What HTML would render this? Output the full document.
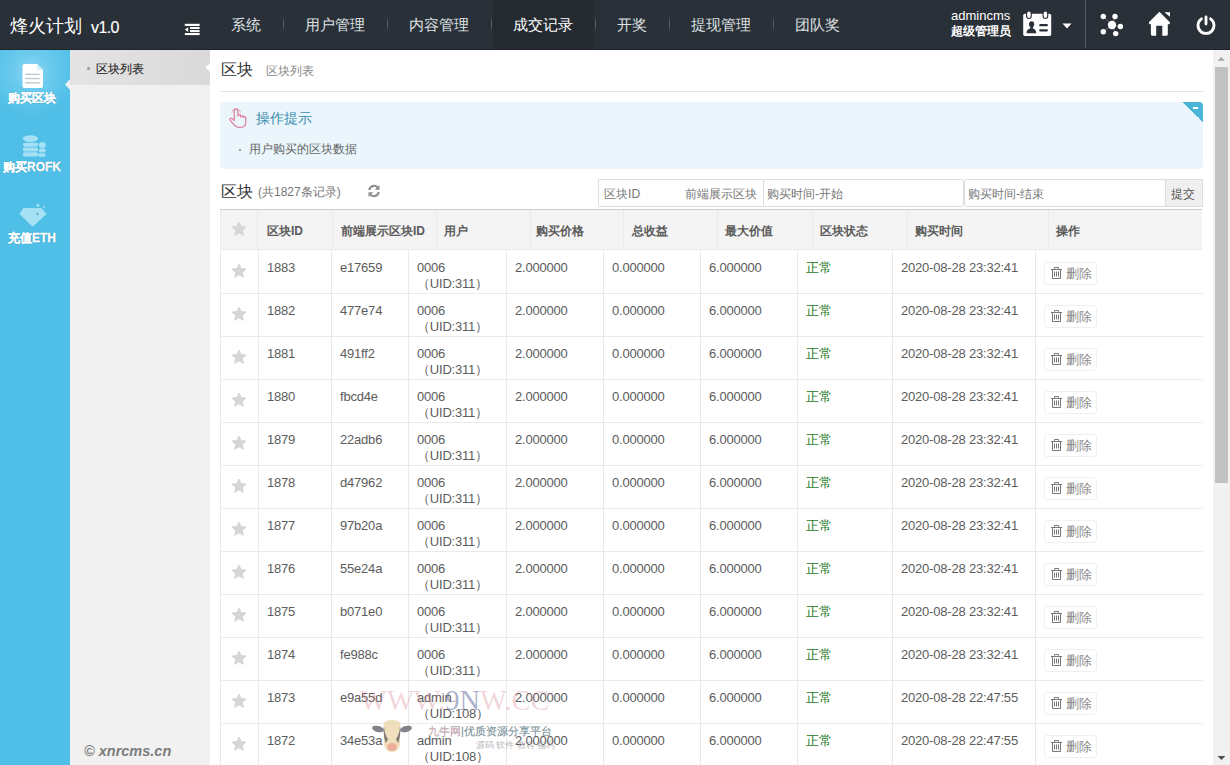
<!DOCTYPE html>
<html><head><meta charset="utf-8">
<style>
*{margin:0;padding:0;box-sizing:border-box}
html,body{width:1230px;height:765px;overflow:hidden;background:#fff;font-family:"Liberation Sans",sans-serif;color:#555}
#hd{position:absolute;left:0;top:0;width:1230px;height:50px;background:#2a3037;border-bottom:1px solid #1f232a}
#logo{position:absolute;left:10px;top:16px;color:#fff;font-size:18px;line-height:20px;white-space:nowrap}
#logo span{font-size:16px;margin-left:9px;letter-spacing:-0.6px;-webkit-text-stroke:0.15px #fff;position:relative;top:0.5px}
.nav{position:absolute;top:17px;color:#dfe1e4;font-size:15px;line-height:16px;white-space:nowrap}
.sep{position:absolute;top:16px;width:1px;height:16px;background:linear-gradient(#2a3037,#5f666e 50%,#2a3037)}
#active{position:absolute;left:493px;top:0;width:100px;height:49px;background:#242a30}
#user{position:absolute;left:951px;top:9px;color:#fff;font-size:13px;line-height:14px;white-space:nowrap}
#user b{display:block;font-size:12px;line-height:14px;margin-top:1px}
#vline{position:absolute;left:1085px;top:0;width:1px;height:48px;background:#565c64}
#side{position:absolute;left:0;top:50px;width:70px;height:715px;background:#4fbfe7}
.si{position:absolute;left:-3px;width:70px;text-align:center;color:#fff;font-size:12px;font-weight:bold;line-height:12px;white-space:nowrap;-webkit-text-stroke:0.3px #fff;text-shadow:0 0 1px rgba(0,70,100,.7)}
#s1bg{position:absolute;left:0;top:50px;width:70px;height:72px;background:radial-gradient(ellipse 45px 45px at 45% 30%,#8fd7f2 0%,#6ccbee 40%,#4fbfe7 100%)}
#sub{position:absolute;left:70px;top:50px;width:140px;height:715px;background:#f1f1f1}
#subact{position:absolute;left:70px;top:50px;width:140px;height:35px;background:linear-gradient(90deg,#e4e4e4,#d9d9d9)}
#main{position:absolute;left:210px;top:50px;width:1003px;height:715px;background:#fff}
#sb{position:absolute;left:1213px;top:50px;width:17px;height:715px;background:#f1f1f1}
#thumb{position:absolute;left:1215px;top:67px;width:13px;height:416px;background:#c1c1c1}
.t{position:absolute;white-space:nowrap}
#tip{position:absolute;left:220px;top:102px;width:983px;height:67px;background:#eaf6fb;border-radius:4px;overflow:hidden}
#tbl{position:absolute;left:220px;top:249px;border-collapse:collapse;table-layout:fixed;font-size:13px;color:#5c5c5c;letter-spacing:-0.2px}
#tbl td{height:43px;border:1px solid #eaeaea;vertical-align:top;padding:9px 0 1px 8px;line-height:16px;white-space:nowrap}
#tbl td.st,#tbl tr:first-child td.st{padding:0 0 2px 0;text-align:center;color:#cfcfcf;font-size:16px;vertical-align:middle}
#tbl td.ok{color:#257a25}
#tbl tr:first-child td{height:44px;padding-top:10px}
#tbl td:last-child{border-right:none}
.del{display:inline-block;margin-top:2px;border:1px solid #f0f0f0;border-radius:3px;padding:3px 4px 2px 6px;color:#888;font-size:13px;line-height:16px}
#th{position:absolute;left:220px;top:209px;width:982px;height:40px;background:#f4f4f4;border-top:1px solid #cdcdcd}
.hc{position:absolute;top:14px;font-size:12px;font-weight:bold;color:#5a5a5a;white-space:nowrap;line-height:14px}
.hs{position:absolute;top:0;width:1px;height:39px;background:#eaeaea}
</style></head>
<body>
<div id="hd">
  <div id="logo">烽火计划<span>v1.0</span></div>
  <svg style="position:absolute;left:184px;top:23px" width="16" height="13" viewBox="0 0 16 13"><rect x="0.8" y="0.8" width="14.8" height="2.2" fill="#fff"/><rect x="6" y="4" width="9.6" height="2" fill="#fff"/><rect x="6" y="7.1" width="9.6" height="2" fill="#fff"/><rect x="0.8" y="10" width="14.8" height="2.1" fill="#fff"/><path d="M0.8 6.55 L4.2 4.2 L4.2 8.9Z" fill="#fff"/></svg>
  <div id="active"></div>
  <div class="nav" style="left:231px">系统</div><div class="sep" style="left:283px"></div>
  <div class="nav" style="left:305px">用户管理</div><div class="sep" style="left:387px"></div>
  <div class="nav" style="left:409px">内容管理</div><div class="sep" style="left:491px"></div>
  <div class="nav" style="left:513px;color:#fff">成交记录</div><div class="sep" style="left:595px"></div>
  <div class="nav" style="left:617px">开奖</div><div class="sep" style="left:669px"></div>
  <div class="nav" style="left:691px">提现管理</div><div class="sep" style="left:773px"></div>
  <div class="nav" style="left:795px">团队奖</div>
  <div id="user">admincms<b>超级管理员</b></div>
  <svg style="position:absolute;left:1023px;top:11px" width="29" height="26" viewBox="0 0 29 26">
    <rect x="0.2" y="2.8" width="28" height="22.3" rx="1.8" fill="#fff"/>
    <rect x="3" y="-0.6" width="5.8" height="8.6" rx="2.9" fill="#2a3037"/>
    <rect x="19.5" y="-0.6" width="5.8" height="8.6" rx="2.9" fill="#2a3037"/>
    <ellipse cx="5.9" cy="3.7" rx="1.8" ry="3.2" fill="#fff"/>
    <ellipse cx="22.4" cy="3.7" rx="1.8" ry="3.2" fill="#fff"/>
    <ellipse cx="8.6" cy="13.3" rx="2.6" ry="3" fill="#2a3037"/>
    <path d="M7.3 15.5 L7.3 17.6 C5 18.2 3.6 19.5 3.5 22.3 L13.3 22.3 C13.2 19.5 11.8 18.2 9.9 17.6 L9.9 15.5Z" fill="#2a3037"/>
    <rect x="16.2" y="13.1" width="8.7" height="2.1" rx="1" fill="#2a3037"/>
    <rect x="16.2" y="18.3" width="8.7" height="2.1" rx="1" fill="#2a3037"/>
  </svg>
  <svg style="position:absolute;left:1062px;top:23px" width="10" height="6" viewBox="0 0 10 6"><path d="M0.5 0.5 L9.5 0.5 L5 5.5Z" fill="#fff"/></svg>
  <div id="vline"></div>
  <svg style="position:absolute;left:1098px;top:12px" width="26" height="26" viewBox="0 0 26 26">
    <g stroke="#fff" stroke-width="0.6" opacity="0.5"><line x1="14" y1="13" x2="5.3" y2="4.5"/><line x1="14" y1="13" x2="17" y2="4.5"/><line x1="14" y1="13" x2="22.4" y2="14.5"/><line x1="14" y1="13" x2="17.7" y2="21.6"/><line x1="14" y1="13" x2="5.3" y2="19.8"/></g>
    <circle cx="14" cy="13" r="4.2" fill="#fff"/>
    <circle cx="5.3" cy="4.5" r="2.7" fill="#fff"/><circle cx="17" cy="4.5" r="2.7" fill="#fff"/><circle cx="22.4" cy="14.5" r="2.7" fill="#fff"/><circle cx="17.7" cy="21.6" r="2.7" fill="#fff"/><circle cx="5.3" cy="19.8" r="2.7" fill="#fff"/>
  </svg>
  <svg style="position:absolute;left:1147px;top:11px" width="25" height="26" viewBox="0 0 25 26">
    <path d="M12.4 0.8 L22.4 10.7 C23.4 11.7 22.9 13.2 21.6 13.2 L20.8 13.2 L20.8 23.2 C20.8 24.1 20.1 24.7 19.2 24.7 L15.3 24.7 L15.3 14.8 L9.2 14.8 L9.2 24.7 L5.5 24.7 C4.6 24.7 3.9 24.1 3.9 23.2 L3.9 13.2 L3.2 13.2 C1.9 13.2 1.4 11.7 2.4 10.7Z" fill="#fff"/>
    <path d="M17.4 1.3 L23 1.3 L23 5.8Z" fill="#fff"/>
  </svg>
  <svg style="position:absolute;left:1195px;top:14px" width="22" height="22" viewBox="0 0 22 22">
    <path d="M6.5 4.8 A8 8 0 1 0 15.5 4.8" fill="none" stroke="#fff" stroke-width="2.8" stroke-linecap="round"/>
    <line x1="11" y1="3" x2="11" y2="10" stroke="#fff" stroke-width="2.8" stroke-linecap="round"/>
  </svg>
</div>

<div id="side"></div>
<div id="s1bg"></div>
<svg style="position:absolute;left:22px;top:64px" width="22" height="24" viewBox="0 0 22 24"><path d="M2 0 L15 0 L21 6 L21 22 C21 23 20.3 24 19.3 24 L2.2 24 C1.2 24 0.5 23 0.5 22 L0.5 2 C0.5 1 1.2 0 2.2 0Z" fill="#fff"/><path d="M15 0 L15 4.5 C15 5.5 15.8 6 16.8 6 L21 6Z" fill="#d5eef8"/><rect x="3.2" y="9.7" width="14.5" height="1.3" fill="#b9c7ce"/><rect x="3.2" y="13.9" width="14.5" height="1.3" fill="#b9c7ce"/><rect x="3.2" y="18.2" width="14.5" height="1.3" fill="#b9c7ce"/></svg>
<div class="si" style="top:92px">购买区块</div>
<svg style="position:absolute;left:65px;top:79px" width="5" height="11" viewBox="0 0 5 11"><path d="M5 0 L0 5.5 L5 11Z" fill="#f0f0f0"/></svg>
<svg style="position:absolute;left:22px;top:134px" width="25" height="24" viewBox="0 0 25 24">
  <g fill="#c8f0fc" opacity="0.7"><ellipse cx="8.45" cy="4.6" rx="7.65" ry="3.4"/><rect x="0.8" y="8.7" width="15.3" height="4" rx="2"/><rect x="0.8" y="13.6" width="15.3" height="4" rx="2"/><rect x="0.8" y="18.3" width="15.3" height="4.1" rx="2"/>
  <ellipse cx="20.35" cy="10.9" rx="3.5" ry="3"/><rect x="16.8" y="14.6" width="6.9" height="3.8" rx="1.9"/><rect x="16" y="19.2" width="7.7" height="3.6" rx="1.8"/></g>
</svg>
<div class="si" style="top:161px">购买ROFK</div>
<svg style="position:absolute;left:19px;top:200px" width="28" height="28" viewBox="0 0 28 28">
  <g fill="#c8f0fc" opacity="0.7"><path d="M4.3 8 L22.2 8 L27.6 14 L13.7 26.8 L0.5 14Z"/><circle cx="18.9" cy="5.2" r="1.5"/><circle cx="25" cy="7" r="1"/></g>
  <circle cx="18.4" cy="14.1" r="1.1" fill="#5aa8c8"/>
</svg>
<div class="si" style="top:232px">充值ETH</div>

<div id="sub"></div>
<div id="subact"></div>
<div class="t" style="left:87px;top:67px;width:3px;height:3px;border-radius:2px;background:#999"></div>
<div class="t" style="left:96px;top:62px;font-size:12px;line-height:14px;color:#2a2a2a;-webkit-text-stroke:0.15px #2a2a2a">区块列表</div>
<div class="t" style="left:84px;top:743px;font-size:14.5px;line-height:16px;color:#7c7c7c;font-style:italic;font-weight:bold">© xnrcms.cn</div>

<div id="main"></div>
<svg style="position:absolute;left:205px;top:63px" width="5" height="9" viewBox="0 0 5 9"><path d="M5 0 L0.5 4.5 L5 9Z" fill="#fff"/></svg>
<div class="t" style="left:221px;top:61px;font-size:16px;line-height:17px;color:#333">区块</div>
<div class="t" style="left:266px;top:64px;font-size:12px;line-height:14px;color:#888">区块列表</div>
<div class="t" style="left:220px;top:91px;width:983px;height:1px;background:#e5e5e5"></div>

<div id="tip">
  
  <div class="t" style="right:0;top:0;width:20px;height:20px;background:linear-gradient(45deg,transparent 50%,#4bb5d8 50%)"></div>
  <div class="t" style="left:973px;top:5px;width:5px;height:1.5px;background:#fff"></div>
</div>
<svg style="position:absolute;left:228px;top:106px" width="20" height="23" viewBox="0 0 20 23"><g fill="none" stroke="#dc8199" stroke-width="1.25" stroke-linejoin="round" stroke-linecap="round"><path d="M6.3 14 L6.3 5.2 C6.3 2.6 10 2.6 10 5.2 L10 10.2 M10 10 C10 8.2 12.6 8.2 12.6 10 L12.6 11 M12.6 10.8 C12.6 9.2 15.2 9.2 15.2 10.8 L15.2 11.6 M15.2 11.6 C15.2 10.2 17.8 10.2 17.8 11.6 L17.8 16 C17.8 19.5 15.6 21.3 12.4 21.3 L10.6 21.3 C8.2 21.3 6.8 20 5.4 18.2 L2.2 14.3 C1.2 13.1 2.6 11.5 3.9 12.4 L6.3 14.6"/><path d="M3.9 6.2 A4.3 4.3 0 0 1 12.4 6.2" stroke-width="1" opacity="0.6"/></g></svg>
<div class="t" style="left:256px;top:111px;font-size:14px;line-height:15px;color:#3a8cae">操作提示</div>
<div class="t" style="left:239px;top:149px;width:2px;height:2px;background:#999"></div>
<div class="t" style="left:249px;top:143px;font-size:12px;line-height:13px;color:#666">用户购买的区块数据</div>

<div class="t" style="left:221px;top:183px;font-size:16px;line-height:17px;color:#333">区块</div>
<div class="t" style="left:258px;top:185px;font-size:12px;line-height:14px;color:#777">(共1827条记录)</div>
<svg style="position:absolute;left:367px;top:184px" width="14" height="14" viewBox="0 0 14 14"><path d="M2.2 6 A5 5 0 0 1 11.2 4" fill="none" stroke="#8c8c8c" stroke-width="2"/><path d="M12.5 1 L12.5 5.8 L7.8 5.8Z" fill="#8c8c8c"/><path d="M11.8 8 A5 5 0 0 1 2.8 10" fill="none" stroke="#8c8c8c" stroke-width="2"/><path d="M1.5 13 L1.5 8.2 L6.2 8.2Z" fill="#8c8c8c"/></svg>

<div class="t" style="left:598px;top:179px;width:166px;height:28px;border:1px solid #ddd;border-right:none;border-radius:2px 0 0 2px"></div>
<div class="t" style="left:604px;top:187px;font-size:12.3px;line-height:14px;color:#777">区块ID</div>
<div class="t" style="left:685px;top:187px;font-size:12.3px;line-height:14px;color:#777">前端展示区块</div>
<div class="t" style="left:763px;top:179px;width:201px;height:28px;border:1px solid #ddd;border-radius:3px"></div>
<div class="t" style="left:767px;top:187px;font-size:12.3px;line-height:14px;color:#777">购买时间-开始</div>
<div class="t" style="left:964px;top:179px;width:202px;height:28px;border:1px solid #ddd;border-radius:3px"></div>
<div class="t" style="left:968px;top:187px;font-size:12.3px;line-height:14px;color:#777">购买时间-结束</div>
<div class="t" style="left:1165px;top:179px;width:38px;height:28px;border:1px solid #ddd;background:#f0f0f0"></div>
<div class="t" style="left:1171px;top:187px;font-size:12.3px;line-height:14px;color:#555">提交</div>

<div id="th">
  <div class="hs" style="left:0px"></div>
  <div class="hs" style="left:37px"></div><div class="hs" style="left:112px"></div><div class="hs" style="left:216px"></div><div class="hs" style="left:310px"></div><div class="hs" style="left:403px"></div><div class="hs" style="left:497px"></div><div class="hs" style="left:592px"></div><div class="hs" style="left:687px"></div><div class="hs" style="left:828px"></div>
  <svg style="position:absolute;left:11px;top:11px" width="16" height="16" viewBox="0 0 24 24"><path d="M12 1.5 L15.1 8.3 L22.5 9.1 L17 14.1 L18.5 21.4 L12 17.7 L5.5 21.4 L7 14.1 L1.5 9.1 L8.9 8.3Z" fill="#d6d6d6" stroke="#d6d6d6" stroke-width="1.5" stroke-linejoin="round"/></svg>
  <div class="hc" style="left:47px">区块ID</div>
  <div class="hc" style="left:121px">前端展示区块ID</div>
  <div class="hc" style="left:224px">用户</div>
  <div class="hc" style="left:316px">购买价格</div>
  <div class="hc" style="left:412px">总收益</div>
  <div class="hc" style="left:505px">最大价值</div>
  <div class="hc" style="left:600px">区块状态</div>
  <div class="hc" style="left:695px">购买时间</div>
  <div class="hc" style="left:836px">操作</div>
</div>

<table id="tbl">
<colgroup><col style="width:38px"><col style="width:73px"><col style="width:77px"><col style="width:98px"><col style="width:97px"><col style="width:97px"><col style="width:97px"><col style="width:95px"><col style="width:143px"><col style="width:167px"></colgroup>
<tbody>
<tr><td class="st"><svg width="16" height="16" viewBox="0 0 24 24" style="display:block;margin:0 auto;position:relative;left:-1px"><path d="M12 1.5 L15.1 8.3 L22.5 9.1 L17 14.1 L18.5 21.4 L12 17.7 L5.5 21.4 L7 14.1 L1.5 9.1 L8.9 8.3Z" fill="#d6d6d6" stroke="#d6d6d6" stroke-width="1.5" stroke-linejoin="round"/></svg></td><td>1883</td><td>e17659</td><td>0006<br>（UID:311）</td><td>2.000000</td><td>0.000000</td><td>6.000000</td><td class="ok">正常</td><td>2020-08-28 23:32:41</td><td><span class="del"><svg width="11" height="12" viewBox="0 0 11 12" style="vertical-align:-1px;margin-right:4px"><path d="M3.5 1.8 L3.5 0.5 L7.5 0.5 L7.5 1.8 M0 2.5 L11 2.5 M1.5 2.5 L1.5 11.5 L9.5 11.5 L9.5 2.5 M3.5 4.5 L3.5 9.5 M5.5 4.5 L5.5 9.5 M7.5 4.5 L7.5 9.5" fill="none" stroke="#777" stroke-width="1"/></svg>删除</span></td></tr>
<tr><td class="st"><svg width="16" height="16" viewBox="0 0 24 24" style="display:block;margin:0 auto;position:relative;left:-1px"><path d="M12 1.5 L15.1 8.3 L22.5 9.1 L17 14.1 L18.5 21.4 L12 17.7 L5.5 21.4 L7 14.1 L1.5 9.1 L8.9 8.3Z" fill="#d6d6d6" stroke="#d6d6d6" stroke-width="1.5" stroke-linejoin="round"/></svg></td><td>1882</td><td>477e74</td><td>0006<br>（UID:311）</td><td>2.000000</td><td>0.000000</td><td>6.000000</td><td class="ok">正常</td><td>2020-08-28 23:32:41</td><td><span class="del"><svg width="11" height="12" viewBox="0 0 11 12" style="vertical-align:-1px;margin-right:4px"><path d="M3.5 1.8 L3.5 0.5 L7.5 0.5 L7.5 1.8 M0 2.5 L11 2.5 M1.5 2.5 L1.5 11.5 L9.5 11.5 L9.5 2.5 M3.5 4.5 L3.5 9.5 M5.5 4.5 L5.5 9.5 M7.5 4.5 L7.5 9.5" fill="none" stroke="#777" stroke-width="1"/></svg>删除</span></td></tr>
<tr><td class="st"><svg width="16" height="16" viewBox="0 0 24 24" style="display:block;margin:0 auto;position:relative;left:-1px"><path d="M12 1.5 L15.1 8.3 L22.5 9.1 L17 14.1 L18.5 21.4 L12 17.7 L5.5 21.4 L7 14.1 L1.5 9.1 L8.9 8.3Z" fill="#d6d6d6" stroke="#d6d6d6" stroke-width="1.5" stroke-linejoin="round"/></svg></td><td>1881</td><td>491ff2</td><td>0006<br>（UID:311）</td><td>2.000000</td><td>0.000000</td><td>6.000000</td><td class="ok">正常</td><td>2020-08-28 23:32:41</td><td><span class="del"><svg width="11" height="12" viewBox="0 0 11 12" style="vertical-align:-1px;margin-right:4px"><path d="M3.5 1.8 L3.5 0.5 L7.5 0.5 L7.5 1.8 M0 2.5 L11 2.5 M1.5 2.5 L1.5 11.5 L9.5 11.5 L9.5 2.5 M3.5 4.5 L3.5 9.5 M5.5 4.5 L5.5 9.5 M7.5 4.5 L7.5 9.5" fill="none" stroke="#777" stroke-width="1"/></svg>删除</span></td></tr>
<tr><td class="st"><svg width="16" height="16" viewBox="0 0 24 24" style="display:block;margin:0 auto;position:relative;left:-1px"><path d="M12 1.5 L15.1 8.3 L22.5 9.1 L17 14.1 L18.5 21.4 L12 17.7 L5.5 21.4 L7 14.1 L1.5 9.1 L8.9 8.3Z" fill="#d6d6d6" stroke="#d6d6d6" stroke-width="1.5" stroke-linejoin="round"/></svg></td><td>1880</td><td>fbcd4e</td><td>0006<br>（UID:311）</td><td>2.000000</td><td>0.000000</td><td>6.000000</td><td class="ok">正常</td><td>2020-08-28 23:32:41</td><td><span class="del"><svg width="11" height="12" viewBox="0 0 11 12" style="vertical-align:-1px;margin-right:4px"><path d="M3.5 1.8 L3.5 0.5 L7.5 0.5 L7.5 1.8 M0 2.5 L11 2.5 M1.5 2.5 L1.5 11.5 L9.5 11.5 L9.5 2.5 M3.5 4.5 L3.5 9.5 M5.5 4.5 L5.5 9.5 M7.5 4.5 L7.5 9.5" fill="none" stroke="#777" stroke-width="1"/></svg>删除</span></td></tr>
<tr><td class="st"><svg width="16" height="16" viewBox="0 0 24 24" style="display:block;margin:0 auto;position:relative;left:-1px"><path d="M12 1.5 L15.1 8.3 L22.5 9.1 L17 14.1 L18.5 21.4 L12 17.7 L5.5 21.4 L7 14.1 L1.5 9.1 L8.9 8.3Z" fill="#d6d6d6" stroke="#d6d6d6" stroke-width="1.5" stroke-linejoin="round"/></svg></td><td>1879</td><td>22adb6</td><td>0006<br>（UID:311）</td><td>2.000000</td><td>0.000000</td><td>6.000000</td><td class="ok">正常</td><td>2020-08-28 23:32:41</td><td><span class="del"><svg width="11" height="12" viewBox="0 0 11 12" style="vertical-align:-1px;margin-right:4px"><path d="M3.5 1.8 L3.5 0.5 L7.5 0.5 L7.5 1.8 M0 2.5 L11 2.5 M1.5 2.5 L1.5 11.5 L9.5 11.5 L9.5 2.5 M3.5 4.5 L3.5 9.5 M5.5 4.5 L5.5 9.5 M7.5 4.5 L7.5 9.5" fill="none" stroke="#777" stroke-width="1"/></svg>删除</span></td></tr>
<tr><td class="st"><svg width="16" height="16" viewBox="0 0 24 24" style="display:block;margin:0 auto;position:relative;left:-1px"><path d="M12 1.5 L15.1 8.3 L22.5 9.1 L17 14.1 L18.5 21.4 L12 17.7 L5.5 21.4 L7 14.1 L1.5 9.1 L8.9 8.3Z" fill="#d6d6d6" stroke="#d6d6d6" stroke-width="1.5" stroke-linejoin="round"/></svg></td><td>1878</td><td>d47962</td><td>0006<br>（UID:311）</td><td>2.000000</td><td>0.000000</td><td>6.000000</td><td class="ok">正常</td><td>2020-08-28 23:32:41</td><td><span class="del"><svg width="11" height="12" viewBox="0 0 11 12" style="vertical-align:-1px;margin-right:4px"><path d="M3.5 1.8 L3.5 0.5 L7.5 0.5 L7.5 1.8 M0 2.5 L11 2.5 M1.5 2.5 L1.5 11.5 L9.5 11.5 L9.5 2.5 M3.5 4.5 L3.5 9.5 M5.5 4.5 L5.5 9.5 M7.5 4.5 L7.5 9.5" fill="none" stroke="#777" stroke-width="1"/></svg>删除</span></td></tr>
<tr><td class="st"><svg width="16" height="16" viewBox="0 0 24 24" style="display:block;margin:0 auto;position:relative;left:-1px"><path d="M12 1.5 L15.1 8.3 L22.5 9.1 L17 14.1 L18.5 21.4 L12 17.7 L5.5 21.4 L7 14.1 L1.5 9.1 L8.9 8.3Z" fill="#d6d6d6" stroke="#d6d6d6" stroke-width="1.5" stroke-linejoin="round"/></svg></td><td>1877</td><td>97b20a</td><td>0006<br>（UID:311）</td><td>2.000000</td><td>0.000000</td><td>6.000000</td><td class="ok">正常</td><td>2020-08-28 23:32:41</td><td><span class="del"><svg width="11" height="12" viewBox="0 0 11 12" style="vertical-align:-1px;margin-right:4px"><path d="M3.5 1.8 L3.5 0.5 L7.5 0.5 L7.5 1.8 M0 2.5 L11 2.5 M1.5 2.5 L1.5 11.5 L9.5 11.5 L9.5 2.5 M3.5 4.5 L3.5 9.5 M5.5 4.5 L5.5 9.5 M7.5 4.5 L7.5 9.5" fill="none" stroke="#777" stroke-width="1"/></svg>删除</span></td></tr>
<tr><td class="st"><svg width="16" height="16" viewBox="0 0 24 24" style="display:block;margin:0 auto;position:relative;left:-1px"><path d="M12 1.5 L15.1 8.3 L22.5 9.1 L17 14.1 L18.5 21.4 L12 17.7 L5.5 21.4 L7 14.1 L1.5 9.1 L8.9 8.3Z" fill="#d6d6d6" stroke="#d6d6d6" stroke-width="1.5" stroke-linejoin="round"/></svg></td><td>1876</td><td>55e24a</td><td>0006<br>（UID:311）</td><td>2.000000</td><td>0.000000</td><td>6.000000</td><td class="ok">正常</td><td>2020-08-28 23:32:41</td><td><span class="del"><svg width="11" height="12" viewBox="0 0 11 12" style="vertical-align:-1px;margin-right:4px"><path d="M3.5 1.8 L3.5 0.5 L7.5 0.5 L7.5 1.8 M0 2.5 L11 2.5 M1.5 2.5 L1.5 11.5 L9.5 11.5 L9.5 2.5 M3.5 4.5 L3.5 9.5 M5.5 4.5 L5.5 9.5 M7.5 4.5 L7.5 9.5" fill="none" stroke="#777" stroke-width="1"/></svg>删除</span></td></tr>
<tr><td class="st"><svg width="16" height="16" viewBox="0 0 24 24" style="display:block;margin:0 auto;position:relative;left:-1px"><path d="M12 1.5 L15.1 8.3 L22.5 9.1 L17 14.1 L18.5 21.4 L12 17.7 L5.5 21.4 L7 14.1 L1.5 9.1 L8.9 8.3Z" fill="#d6d6d6" stroke="#d6d6d6" stroke-width="1.5" stroke-linejoin="round"/></svg></td><td>1875</td><td>b071e0</td><td>0006<br>（UID:311）</td><td>2.000000</td><td>0.000000</td><td>6.000000</td><td class="ok">正常</td><td>2020-08-28 23:32:41</td><td><span class="del"><svg width="11" height="12" viewBox="0 0 11 12" style="vertical-align:-1px;margin-right:4px"><path d="M3.5 1.8 L3.5 0.5 L7.5 0.5 L7.5 1.8 M0 2.5 L11 2.5 M1.5 2.5 L1.5 11.5 L9.5 11.5 L9.5 2.5 M3.5 4.5 L3.5 9.5 M5.5 4.5 L5.5 9.5 M7.5 4.5 L7.5 9.5" fill="none" stroke="#777" stroke-width="1"/></svg>删除</span></td></tr>
<tr><td class="st"><svg width="16" height="16" viewBox="0 0 24 24" style="display:block;margin:0 auto;position:relative;left:-1px"><path d="M12 1.5 L15.1 8.3 L22.5 9.1 L17 14.1 L18.5 21.4 L12 17.7 L5.5 21.4 L7 14.1 L1.5 9.1 L8.9 8.3Z" fill="#d6d6d6" stroke="#d6d6d6" stroke-width="1.5" stroke-linejoin="round"/></svg></td><td>1874</td><td>fe988c</td><td>0006<br>（UID:311）</td><td>2.000000</td><td>0.000000</td><td>6.000000</td><td class="ok">正常</td><td>2020-08-28 23:32:41</td><td><span class="del"><svg width="11" height="12" viewBox="0 0 11 12" style="vertical-align:-1px;margin-right:4px"><path d="M3.5 1.8 L3.5 0.5 L7.5 0.5 L7.5 1.8 M0 2.5 L11 2.5 M1.5 2.5 L1.5 11.5 L9.5 11.5 L9.5 2.5 M3.5 4.5 L3.5 9.5 M5.5 4.5 L5.5 9.5 M7.5 4.5 L7.5 9.5" fill="none" stroke="#777" stroke-width="1"/></svg>删除</span></td></tr>
<tr><td class="st"><svg width="16" height="16" viewBox="0 0 24 24" style="display:block;margin:0 auto;position:relative;left:-1px"><path d="M12 1.5 L15.1 8.3 L22.5 9.1 L17 14.1 L18.5 21.4 L12 17.7 L5.5 21.4 L7 14.1 L1.5 9.1 L8.9 8.3Z" fill="#d6d6d6" stroke="#d6d6d6" stroke-width="1.5" stroke-linejoin="round"/></svg></td><td>1873</td><td>e9a55d</td><td>admin<br>（UID:108）</td><td>2.000000</td><td>0.000000</td><td>6.000000</td><td class="ok">正常</td><td>2020-08-28 22:47:55</td><td><span class="del"><svg width="11" height="12" viewBox="0 0 11 12" style="vertical-align:-1px;margin-right:4px"><path d="M3.5 1.8 L3.5 0.5 L7.5 0.5 L7.5 1.8 M0 2.5 L11 2.5 M1.5 2.5 L1.5 11.5 L9.5 11.5 L9.5 2.5 M3.5 4.5 L3.5 9.5 M5.5 4.5 L5.5 9.5 M7.5 4.5 L7.5 9.5" fill="none" stroke="#777" stroke-width="1"/></svg>删除</span></td></tr>
<tr><td class="st"><svg width="16" height="16" viewBox="0 0 24 24" style="display:block;margin:0 auto;position:relative;left:-1px"><path d="M12 1.5 L15.1 8.3 L22.5 9.1 L17 14.1 L18.5 21.4 L12 17.7 L5.5 21.4 L7 14.1 L1.5 9.1 L8.9 8.3Z" fill="#d6d6d6" stroke="#d6d6d6" stroke-width="1.5" stroke-linejoin="round"/></svg></td><td>1872</td><td>34e53a</td><td>admin<br>（UID:108）</td><td>2.000000</td><td>0.000000</td><td>6.000000</td><td class="ok">正常</td><td>2020-08-28 22:47:55</td><td><span class="del"><svg width="11" height="12" viewBox="0 0 11 12" style="vertical-align:-1px;margin-right:4px"><path d="M3.5 1.8 L3.5 0.5 L7.5 0.5 L7.5 1.8 M0 2.5 L11 2.5 M1.5 2.5 L1.5 11.5 L9.5 11.5 L9.5 2.5 M3.5 4.5 L3.5 9.5 M5.5 4.5 L5.5 9.5 M7.5 4.5 L7.5 9.5" fill="none" stroke="#777" stroke-width="1"/></svg>删除</span></td></tr>
</tbody></table>

<div id="sb"></div>
<div id="thumb"></div>
<svg style="position:absolute;left:1217px;top:56px" width="9" height="6" viewBox="0 0 9 6"><path d="M0.5 4.8 L4.2 1 L7.9 4.8Z" fill="#a3a3a3"/></svg>
<svg style="position:absolute;left:1217px;top:755px" width="9" height="6" viewBox="0 0 9 6"><path d="M0.5 0.9 L8.4 0.9 L4.45 4.9Z" fill="#505050"/></svg>

<div class="t" style="left:360px;top:685px;font-family:'Liberation Serif',serif;font-size:28.5px;line-height:32px;color:rgba(205,110,120,.28)">WWW.<span style="color:rgba(70,80,140,.45)">9N</span>W.CC</div>
<svg style="position:absolute;left:372px;top:719px" width="40" height="34" viewBox="0 0 40 34">
  <ellipse cx="6" cy="10" rx="6" ry="3" fill="rgba(90,90,100,.75)" transform="rotate(15 6 10)"/>
  <ellipse cx="34" cy="10" rx="6" ry="3" fill="rgba(90,90,100,.75)" transform="rotate(-15 34 10)"/>
  <path d="M12 4 C14 0 26 0 28 4 L28 24 C28 30 24 33 20 33 C16 33 12 30 12 24Z" fill="rgba(235,215,170,.8)"/>
  <path d="M12 6 C12 12 14 18 16 20 L14 24 C12 20 11 12 12 6Z" fill="rgba(80,80,90,.7)"/>
  <path d="M28 6 C28 12 26 18 24 20 L26 24 C28 20 29 12 28 6Z" fill="rgba(80,80,90,.7)"/>
  <ellipse cx="20" cy="28" rx="5" ry="4" fill="rgba(235,160,150,.8)"/>
</svg>
<div class="t" style="left:428px;top:725px;font-size:11px;line-height:13px;-webkit-text-stroke:0.3px rgba(90,120,130,.5);color:rgba(90,120,130,.75)"><span style="color:rgba(220,150,160,.75)">九牛网</span>|优质资源分享平台</div>
<div class="t" style="left:476px;top:740px;font-size:8.5px;line-height:10px;letter-spacing:0;color:rgba(120,110,120,.55)">源码 软件 教程 福利</div>
</body></html>
